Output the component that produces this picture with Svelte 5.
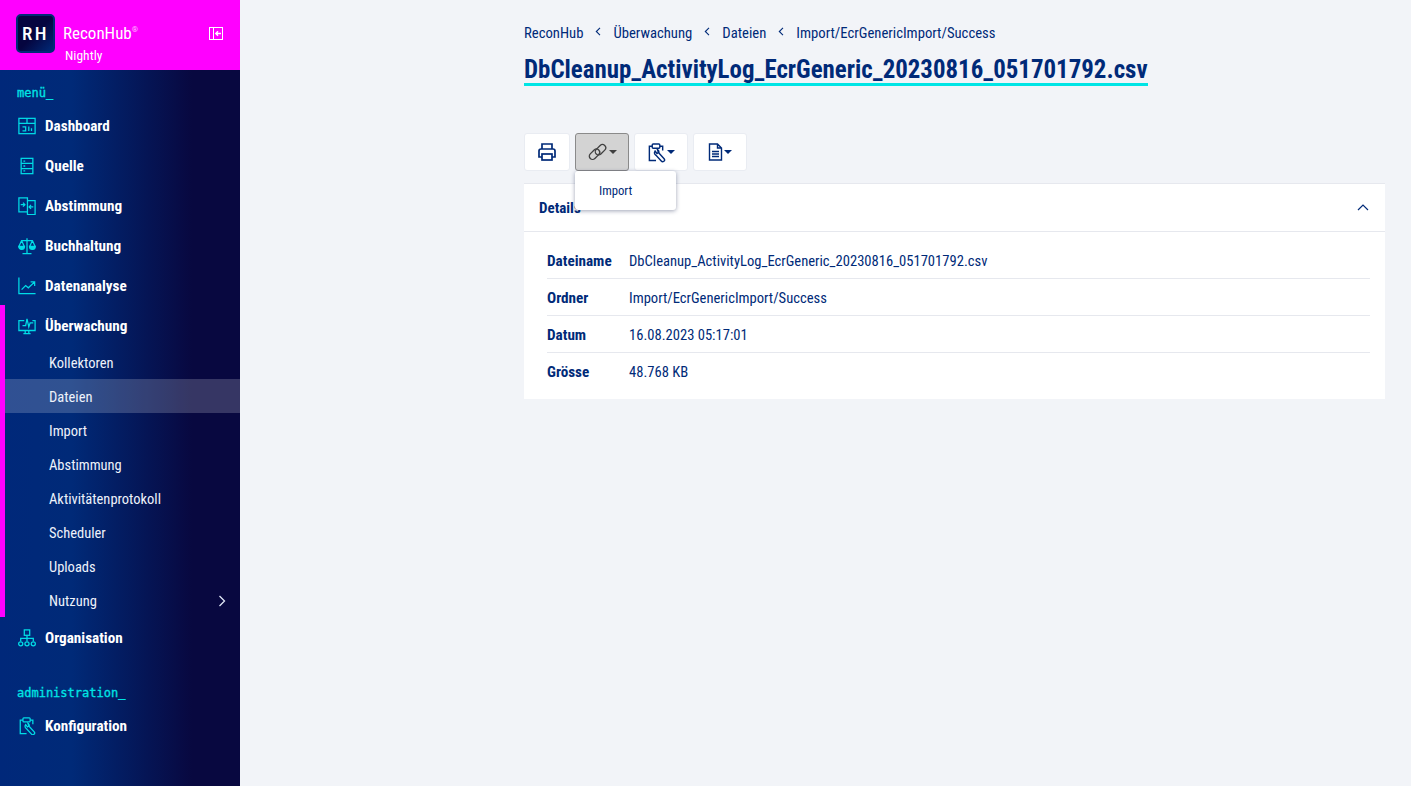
<script>
	const monitoring = ['Kollektoren', 'Dateien', 'Import', 'Abstimmung', 'Aktivitätenprotokoll', 'Scheduler', 'Uploads', 'Nutzung'];
	const crumbs = ['ReconHub', 'Überwachung', 'Dateien', 'Import/EcrGenericImport/Success'];
	const details = [
		['Dateiname', 'DbCleanup_ActivityLog_EcrGeneric_20230816_051701792.csv'],
		['Ordner', 'Import/EcrGenericImport/Success'],
		['Datum', '16.08.2023 05:17:01'],
		['Grösse', '48.768 KB']
	];
</script>

<div class="page">
	<aside class="sidebar">
		<header class="brand">
			<div class="logo">RH</div>
			<div class="brand-text">
				<div class="brand-name">ReconHub<sup>®</sup></div>
				<div class="brand-sub">Nightly</div>
			</div>
			<svg class="collapse" width="14" height="13" viewBox="0 0 14 13" fill="none" stroke="#fff">
				<rect x="0.5" y="0.5" width="13" height="12" />
				<path d="M4.5 0.5v12" />
				<path d="M12 6.500H7M9 4.300 6.800 6.500 9 8.700" stroke-width="1.4" />
			</svg>
		</header>

		<div class="section-label first">menü_</div>
		<a class="item">
			<svg viewBox="0 0 20 20"><rect x="1" y="1.500" width="18" height="17" /><path d="M1 7h18M10 1.500V7M5 11h3.500v4.500H5M12 10.500v5M15 12.500v3" /></svg>
			Dashboard
		</a>
		<a class="item">
			<svg viewBox="0 0 20 20"><rect x="3.500" y="1.500" width="13" height="17" /><path d="M3.500 7.200h13M3.500 12.800h13M6 4.500h2M6 10h2M6 15.500h2" /></svg>
			Quelle
		</a>
		<a class="item">
			<svg viewBox="0 0 20 20"><path d="M1 1h9.500v15.500H1zM10.500 4H19v15.500h-8.500v-3" /><path d="M3 8.500h4.500M5.500 6.300l2.200 2.200-2.200 2.200M17 11h-4.500M14.500 8.800 12.300 11l2.200 2.200" /></svg>
			Abstimmung
		</a>
		<a class="item">
			<svg viewBox="0 0 20 20"><path d="M10 1.500V18M5 18.500h10M3.500 4h13" /><path class="solid" d="M0.800 10.500h6.400a3.200 3.200 0 0 1-6.400 0zM12.800 10.500h6.400a3.200 3.200 0 0 1-6.400 0z" /><path d="M4 4 1 10.500M4 4l3 6.500M16 4l-3 6.500M16 4l3 6.500" /></svg>
			Buchhaltung
		</a>
		<a class="item">
			<svg viewBox="0 0 20 20"><path d="M1 .5V18.500H19.500" /><path d="M4 14l4.500-4.500 3 2.500L18 6M14 5.500h4.500V10" /></svg>
			Datenanalyse
		</a>
		<div class="group">
			<a class="item">
				<svg viewBox="0 0 20 20"><path d="M7 4H1v11h18V4h-3M6 18.500h8M8 15v3.500M12 15v3.500M5 9.500h3.500l1.500-7.500 2 9 1.500-4.500H17" /></svg>
				Überwachung
			</a>
			{#each monitoring as label}
				<a class="sub" class:active={label === 'Dateien'}>
					{label}
					{#if label === 'Nutzung'}
						<svg class="chev" width="8" height="12" viewBox="0 0 8 12" fill="none" stroke="#dfe6f5" stroke-width="1.300"><path d="M1.500 1 6.500 6l-5 5" /></svg>
					{/if}
				</a>
			{/each}
		</div>
		<a class="item org">
			<svg viewBox="0 0 20 20"><rect x="7" y="1" width="6" height="6" /><path d="M10 7v6.500M3 13.500V10.500h14v3" /><circle cx="3" cy="16.500" r="2.300" /><circle cx="10" cy="16.500" r="2.300" /><circle cx="17" cy="16.500" r="2.300" /></svg>
			Organisation
		</a>

		<div class="section-label">administration_</div>
		<a class="item">
			<svg viewBox="0 0 20 20"><path d="M5.500 3.500H2.500v15h7M13.500 3.500h3V8" /><rect x="5.500" y="1" width="8" height="4.500" rx="1" /><path d="M8.500 8.500a3.300 3.300 0 0 0 1 4.500l5.500 6a1.700 1.700 0 0 0 3-2.500l-5.500-6a3.300 3.300 0 0 0-1.500-3.500l1 3-1.500 1z" /></svg>
			Konfiguration
		</a>
	</aside>

	<main class="content">
		<nav class="crumbs">
			{#each crumbs as crumb, i}
				{#if i > 0}
					<svg width="6" height="9" viewBox="0 0 6 9" fill="none" stroke="#002a78" stroke-width="1.100"><path d="M5 .8 1.300 4.500 5 8.200" /></svg>
				{/if}
				<span>{crumb}</span>
			{/each}
		</nav>
		<h1><span>DbCleanup_ActivityLog_EcrGeneric_20230816_051701792.csv</span></h1>

		<div class="toolbar">
			<button class="tool print" aria-label="Drucken">
				<svg width="20" height="20" viewBox="0 0 20 20" fill="none" stroke="#002a78" stroke-width="1.700"><path d="M5 7V2h10v5M5 15H2V9a2 2 0 0 1 2-2h12a2 2 0 0 1 2 2v6h-3" /><rect x="5" y="12" width="10" height="6" /></svg>
			</button>
			<div class="menu-wrap">
				<button class="tool open" aria-label="Verknüpfungen">
					<svg width="21" height="18" viewBox="0 0 21 18" fill="none" stroke="#404040" stroke-width="1.300"><rect x="1.500" y="8" width="12" height="6.500" rx="3.250" transform="rotate(-45 7.500 11.250)" /><rect x="7.500" y="3.500" width="12" height="6.500" rx="3.250" transform="rotate(-45 13.500 6.750)" /></svg>
					<i class="caret dark"></i>
				</button>
				<div class="dropdown">Import</div>
			</div>
			<button class="tool" aria-label="Prüfen">
				<svg width="19" height="21" viewBox="0 0 20 20" fill="none" stroke="#002a78" stroke-width="1.500"><path d="M5.500 3.500H2.500v15h7M13.500 3.500h3V8" /><rect x="5.500" y="1" width="8" height="4.500" rx="1" /><path d="M8.500 8.500a3.300 3.300 0 0 0 1 4.500l5.500 6a1.700 1.700 0 0 0 3-2.500l-5.500-6a3.300 3.300 0 0 0-1.500-3.500l1 3-1.500 1z" /></svg>
				<i class="caret"></i>
			</button>
			<button class="tool" aria-label="Dokument">
				<svg width="15" height="18" viewBox="0 0 15 18" fill="none" stroke="#002a78" stroke-width="1.400"><path d="M1.500 1h8l4 4v12h-12zM9.500 1v4h4M4 8.500h7M4 11h7M4 13.500h7" /></svg>
				<i class="caret"></i>
			</button>
		</div>

		<section class="card">
			<div class="card-head">
				<span>Details</span>
				<svg width="12" height="7" viewBox="0 0 12 7" fill="none" stroke="#002a78" stroke-width="1.200"><path d="M1 6l5-5 5 5" /></svg>
			</div>
			<div class="rows">
				{#each details as [key, value]}
					<div class="row">
						<b>{key}</b>
						<span>{value}</span>
					</div>
				{/each}
			</div>
		</section>
	</main>
</div>

<style>
	:global(body) {
		margin: 0;
		background: #f2f4f8;
		font-family: 'Roboto', 'Noto Sans', sans-serif;
		font-stretch: condensed;
	}
	.page {
		display: flex;
		height: 786px;
		overflow: hidden;
		color: #002a78;
	}
	.sidebar {
		width: 240px;
		flex: none;
		background: linear-gradient(90deg, #00287a 0%, #002a78 30%, #080840 80%, #080840 100%);
		color: #fff;
	}
	.brand {
		display: flex;
		align-items: center;
		height: 70px;
		box-sizing: border-box;
		padding: 0 17px 0 16px;
		background: #ff00ff;
	}
	.logo {
		width: 39px;
		height: 39px;
		box-sizing: border-box;
		margin-top: -3px;
		display: flex;
		align-items: center;
		justify-content: center;
		border: 2px solid #002a78;
		border-radius: 5px;
		background: linear-gradient(135deg, #05053f 50%, #002a78);
		font-size: 19px;
		font-weight: 500;
		letter-spacing: 2.500px;
	}
	.brand-text {
		margin-left: 8px;
		flex: 1;
	}
	.brand-name {
		font-size: 17px;
		line-height: 20px;
		margin-top: 15px;
	}
	.brand-name sup {
		font-size: 8px;
		line-height: 0;
		opacity: 0.7;
	}
	.brand-sub {
		font-size: 13.500px;
		line-height: 16px;
		margin: 4px 0 0 2px;
	}
	.collapse {
		margin-top: -3px;
	}
	.section-label {
		font-family: 'DejaVu Sans Mono', monospace;
		font-size: 12px;
		font-weight: 500;
		line-height: 16px;
		color: #00e5e5;
		padding-left: 17px;
		margin: 26px 0 5px;
		-webkit-text-stroke: 0.3px #00e5e5;
	}
	.section-label.first {
		margin-top: 15px;
	}
	a {
		display: flex;
		align-items: center;
		box-sizing: border-box;
		color: #fff;
	}
	.item {
		height: 40px;
		padding-left: 18px;
		font-size: 15.200px;
		font-weight: 700;
		gap: 9px;
	}
	.item svg {
		width: 18px;
		height: 18px;
		flex: none;
		fill: none;
		stroke: #00dce6;
		stroke-width: 1.400;
	}
	.item svg .solid {
		fill: #00dce6;
	}
	.group {
		border-left: 5px solid #ff00ff;
		margin-top: -1px;
	}
	.group .item {
		padding: 2px 0 0 13px;
	}
	.org {
		height: 42px;
	}
	.sub {
		height: 34px;
		padding: 2px 14px 0 44px;
		font-size: 14.500px;
		color: #eef2fb;
		justify-content: space-between;
	}
	.sub.active {
		background: rgba(255, 255, 255, 0.19);
	}
	.content {
		flex: 1;
		padding: 23px 26px 0 284px;
		min-width: 0;
	}
	.crumbs {
		display: flex;
		align-items: center;
		gap: 12px;
		font-size: 14.700px;
		line-height: 20px;
	}
	.crumbs svg {
		margin-top: -4px;
	}
	h1 {
		margin: 13px 0 0;
		font-size: 24.900px;
		font-weight: 700;
		line-height: 27px;
	}
	h1 span {
		display: inline-block;
		border-bottom: 3px solid #00e5e5;
	}
	.toolbar {
		display: flex;
		gap: 5px;
		margin-top: 47px;
	}
	.menu-wrap {
		position: relative;
	}
	.tool {
		width: 54px;
		height: 38px;
		padding: 0;
		display: flex;
		align-items: center;
		justify-content: center;
		gap: 1px;
		background: #fff;
		border: 1px solid #e9ecf2;
		border-radius: 3px;
	}
	.tool.print {
		width: 46px;
	}
	.tool.open {
		background: #d3d3d3;
		border-color: #8a8a8a;
	}
	.caret {
		width: 0;
		height: 0;
		border-left: 4px solid transparent;
		border-right: 4px solid transparent;
		border-top: 4px solid #002a78;
	}
	.caret.dark {
		border-top-color: #404040;
	}
	.dropdown {
		position: absolute;
		left: 0;
		top: 38px;
		width: 101px;
		height: 39px;
		box-sizing: border-box;
		padding: 11px 0 0 24px;
		font-size: 12.700px;
		line-height: 18px;
		background: #fff;
		border-radius: 3px;
		box-shadow: 0 1px 4px rgba(40, 50, 90, 0.45);
		z-index: 2;
	}
	.card {
		margin-top: 12px;
		background: #fff;
		border-top: 1px solid #e6e8ee;
	}
	.card-head {
		height: 47px;
		display: flex;
		align-items: center;
		justify-content: space-between;
		padding: 0 16px 0 15px;
		font-size: 15px;
		font-weight: 700;
		border-bottom: 1px solid #e6e8ee;
	}
	.rows {
		padding: 10px 15px 9px 23px;
	}
	.row {
		display: flex;
		align-items: center;
		height: 37px;
		box-sizing: border-box;
		padding-top: 2px;
		font-size: 14.600px;
		border-bottom: 1px solid #e6e8ee;
	}
	.row:last-child {
		padding-top: 1px;
		border-bottom: 0;
	}
	.row b {
		width: 82px;
		font-size: 15.200px;
		font-weight: 700;
	}
</style>
